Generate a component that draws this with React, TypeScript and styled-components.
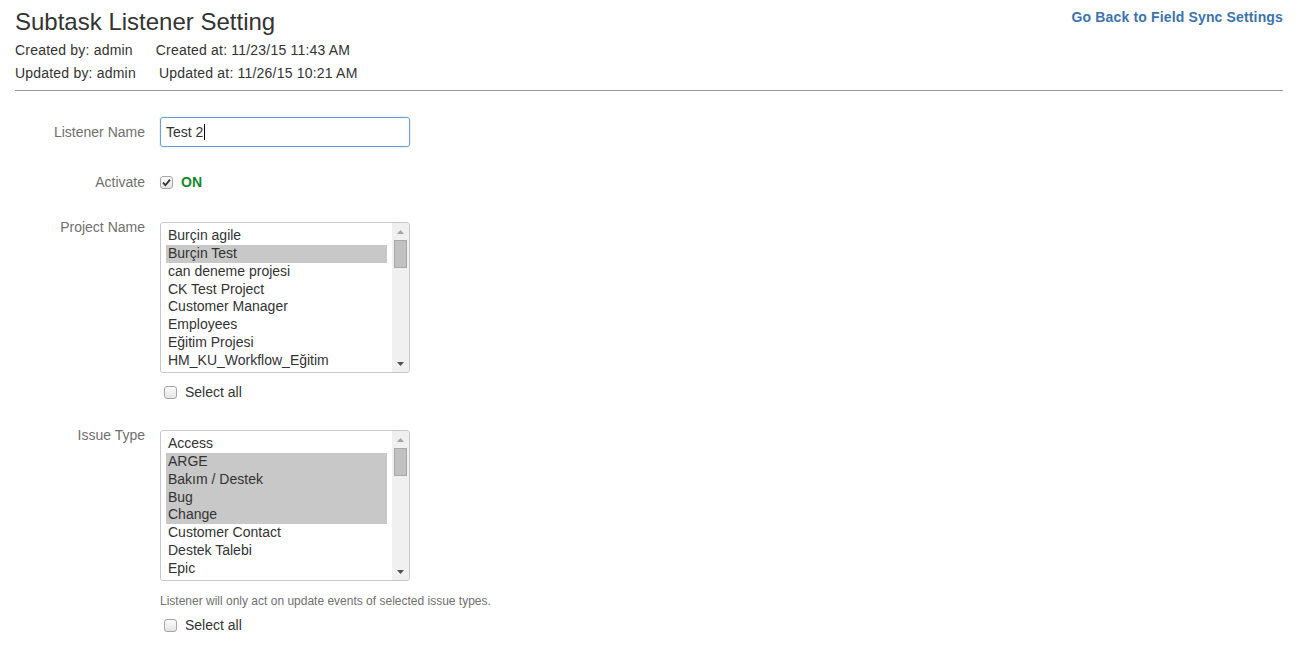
import React from 'react'
import styled, { createGlobalStyle } from 'styled-components'

const Global = createGlobalStyle`
  body {
    margin: 0;
    background: #fff;
    font-family: "Liberation Sans", Arial, sans-serif;
    font-size: 14px;
    color: #333;
  }
`

const Page = styled.div`
  padding: 0 12px 0 15px;
`

const Header = styled.div`
  display: flex;
  justify-content: space-between;
  align-items: flex-start;
`

const Title = styled.h1`
  margin: 7px 0 0;
  font-size: 24px;
  line-height: 30px;
  font-weight: normal;
  color: #333;
`

const BackLink = styled.a`
  margin-top: 7px;
  line-height: 20px;
  font-weight: bold;
  color: #3b73af;
  text-decoration: none;
  letter-spacing: 0.15px;
`

const Meta = styled.div<{ top: number }>`
  display: flex;
  gap: 23px;
  line-height: 20px;
  margin-top: ${(p) => p.top}px;
  letter-spacing: 0.2px;
`

const Rule = styled.div`
  margin-top: 7px;
  border-top: 1px solid #999;
`

const Form = styled.div`
  display: flex;
  flex-direction: column;
  margin-top: 26px;
`

const Row = styled.div<{ top: number }>`
  display: grid;
  grid-template-columns: 130px 1fr;
  column-gap: 15px;
  margin-top: ${(p) => p.top}px;
`

const Label = styled.div<{ lh: number; shift?: number }>`
  text-align: right;
  color: #707070;
  line-height: ${(p) => p.lh}px;
  margin-top: ${(p) => p.shift || 0}px;
`

const TextBox = styled.div`
  box-sizing: border-box;
  width: 250px;
  height: 30px;
  border: 1px solid #6a9fdc;
  border-radius: 3px;
  box-shadow: 0 0 2px rgba(74, 144, 217, 0.4);
  padding: 0 5px;
  display: flex;
  align-items: center;
  color: #333;
`

const Caret = styled.span`
  display: inline-block;
  width: 1px;
  height: 16px;
  background: #000;
  margin-left: 1px;
`

const Inline = styled.div<{ pad?: number }>`
  display: flex;
  align-items: center;
  gap: 8px;
  line-height: 20px;
  padding-left: ${(p) => p.pad || 0}px;
`

const Box = styled.span`
  box-sizing: border-box;
  width: 13px;
  height: 13px;
  border: 1px solid #a6a6a6;
  border-radius: 3px;
  background: linear-gradient(#fcfcfc, #e4e4e4);
  display: inline-flex;
  align-items: center;
  justify-content: center;
`

const On = styled.span`
  color: #14892c;
  font-weight: bold;
`

const ListBox = styled.div`
  box-sizing: border-box;
  width: 250px;
  height: 151px;
  border: 1px solid #c8c8c8;
  border-radius: 3px;
  display: flex;
  overflow: hidden;
  background: #fff;
`

const Options = styled.div`
  flex: 1;
  padding: 4px 5px 0;
  overflow: hidden;
`

const Option = styled.div<{ selected?: boolean }>`
  line-height: 17.85px;
  height: 17.85px;
  padding-left: 2px;
  white-space: nowrap;
  color: #333;
  background: ${(p) => (p.selected ? '#c8c8c8' : 'transparent')};
`

const Scroll = styled.div`
  width: 17px;
  background: #f0f0f0;
  display: flex;
  flex-direction: column;
  align-items: center;
`

const Arrow = styled.div`
  height: 17px;
  display: flex;
  align-items: center;
  justify-content: center;
`

const Thumb = styled.div`
  box-sizing: border-box;
  width: 13px;
  height: 28px;
  background: #c1c1c1;
  border: 1px solid #a8a8a8;
`

const Gap = styled.div`
  flex: 1;
`

const Help = styled.div`
  font-size: 12px;
  line-height: 16px;
  color: #707070;
`

const Check = () => (
  <svg width="9" height="9" viewBox="0 0 9 9">
    <path d="M1 4.6 L3.4 7.2 L8 1.6" fill="none" stroke="#333" strokeWidth="1.8" />
  </svg>
)

const Tri = ({ up, color }: { up?: boolean; color: string }) => (
  <svg width="7" height="4" viewBox="0 0 7 4">
    <path d={up ? 'M0 4 L3.5 0 L7 4 Z' : 'M0 0 L7 0 L3.5 4 Z'} fill={color} />
  </svg>
)

function List({ items, selected }: { items: string[]; selected: string[] }) {
  return (
    <ListBox>
      <Options>
        {items.map((it) => (
          <Option key={it} selected={selected.includes(it)}>
            {it}
          </Option>
        ))}
      </Options>
      <Scroll>
        <Arrow>
          <Tri up color="#a3a3a3" />
        </Arrow>
        <Thumb />
        <Gap />
        <Arrow>
          <Tri color="#505050" />
        </Arrow>
      </Scroll>
    </ListBox>
  )
}

const projects = [
  'Burçin agile',
  'Burçin Test',
  'can deneme projesi',
  'CK Test Project',
  'Customer Manager',
  'Employees',
  'Eğitim Projesi',
  'HM_KU_Workflow_Eğitim',
  'Human Resources Management',
]

const issues = [
  'Access',
  'ARGE',
  'Bakım / Destek',
  'Bug',
  'Change',
  'Customer Contact',
  'Destek Talebi',
  'Epic',
  'Email',
]

export default function App() {
  return (
    <Page>
      <Global />
      <Header>
        <Title>Subtask Listener Setting</Title>
        <BackLink href="#">Go Back to Field Sync Settings</BackLink>
      </Header>
      <Meta top={3}>
        <span>Created by: admin</span>
        <span>Created at: 11/23/15 11:43 AM</span>
      </Meta>
      <Meta top={3}>
        <span>Updated by: admin</span>
        <span>Updated at: 11/26/15 10:21 AM</span>
      </Meta>
      <Rule />
      <Form>
        <Row top={0}>
          <Label lh={30}>Listener Name</Label>
          <div>
            <TextBox>
              Test 2<Caret />
            </TextBox>
          </div>
        </Row>
        <Row top={25}>
          <Label lh={20}>Activate</Label>
          <Inline>
            <Box>
              <Check />
            </Box>
            <On>ON</On>
          </Inline>
        </Row>
        <Row top={30}>
          <Label lh={20} shift={-5}>
            Project Name
          </Label>
          <div>
            <List items={projects} selected={['Burçin Test']} />
            <Inline pad={4} style={{ marginTop: 9 }}>
              <Box />
              <span>Select all</span>
            </Inline>
          </div>
        </Row>
        <Row top={28}>
          <Label lh={20} shift={-5}>
            Issue Type
          </Label>
          <div>
            <List items={issues} selected={['ARGE', 'Bakım / Destek', 'Bug', 'Change']} />
            <Help style={{ marginTop: 12 }}>
              Listener will only act on update events of selected issue types.
            </Help>
            <Inline pad={4} style={{ marginTop: 6 }}>
              <Box />
              <span>Select all</span>
            </Inline>
          </div>
        </Row>
      </Form>
    </Page>
  )
}
